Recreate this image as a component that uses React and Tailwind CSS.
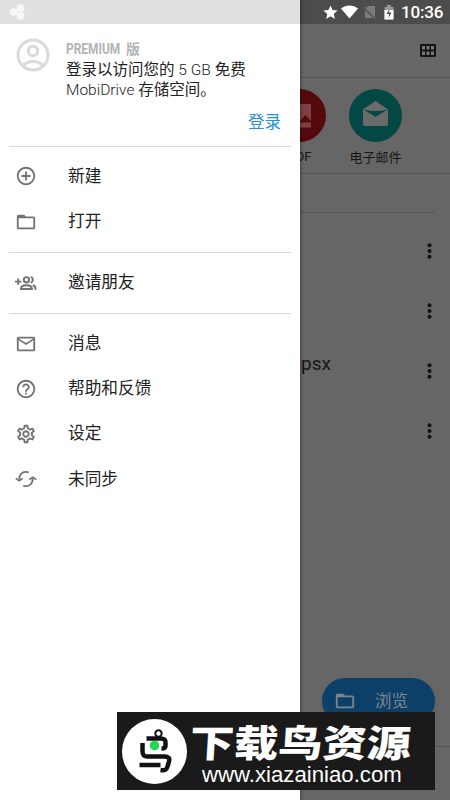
import React from "react";

const font = "font-['Roboto','Noto_Sans_CJK_SC',sans-serif]";

const Icon = ({ children, className = "size-[22px]", box = "0 0 24 24" }) => (
  <svg viewBox={box} className={className} fill="currentColor">
    {children}
  </svg>
);

const icons = {
  add: (
    <path d="M13 7h-2v4H7v2h4v4h2v-4h4v-2h-4V7zm-1-5C6.480 2 2 6.480 2 12s4.480 10 10 10 10-4.480 10-10S17.520 2 12 2zm0 18c-4.410 0-8-3.590-8-8s3.590-8 8-8 8 3.590 8 8-3.590 8-8 8z" />
  ),
  folder: (
    <path d="M10 4H4c-1.100 0-1.990.9-1.990 2L2 18c0 1.100.9 2 2 2h16c1.100 0 2-.9 2-2V8c0-1.100-.9-2-2-2h-8l-2-2zM4 8h16v10H4z" />
  ),
  invite: (
    <g fill="none" stroke="currentColor" strokeWidth="2.100">
      <path d="M0 10.500h7M3.500 7v7" />
      <circle cx="12.500" cy="8.500" r="2.900" />
      <path d="M6.500 18.500c0-5.300 12-5.300 12 0z" />
      <path d="M17 5.600c3.200-.4 3.200 6.200 0 5.800M19.500 14c2 .8 3 2.300 3 5.300" />
    </g>
  ),
  mail: (
    <path d="M22 6c0-1.100-.9-2-2-2H4c-1.100 0-2 .9-2 2v12c0 1.100.9 2 2 2h16c1.100 0 2-.9 2-2V6zm-2 0l-8 5-8-5h16zm0 12H4V8l8 5 8-5v10z" />
  ),
  help: (
    <path d="M11 18h2v-2h-2v2zm1-16C6.480 2 2 6.480 2 12s4.480 10 10 10 10-4.480 10-10S17.520 2 12 2zm0 18c-4.410 0-8-3.590-8-8s3.590-8 8-8 8 3.590 8 8-3.590 8-8 8zm0-14c-2.210 0-4 1.790-4 4h2c0-1.100.9-2 2-2s2 .9 2 2c0 2-3 1.750-3 5h2c0-2.250 3-2.500 3-5 0-2.210-1.790-4-4-4z" />
  ),
  settings: (
    <path d="M19.430 12.980c.04-.32.07-.64.07-.98 0-.34-.03-.66-.07-.98l2.110-1.650c.19-.15.24-.42.12-.64l-2-3.460c-.09-.16-.26-.25-.44-.25-.06 0-.12.010-.17.030l-2.490 1c-.52-.4-1.080-.73-1.690-.98l-.38-2.650C14.460 2.180 14.250 2 14 2h-4c-.25 0-.46.18-.49.42l-.38 2.650c-.61.25-1.170.59-1.690.98l-2.490-1c-.06-.02-.12-.03-.18-.03-.17 0-.34.09-.43.25l-2 3.460c-.13.22-.07.49.12.64l2.110 1.650c-.04.32-.07.65-.07.98 0 .33.030.66.070.98l-2.110 1.650c-.19.15-.24.42-.12.64l2 3.460c.09.16.26.25.44.25.060 0 .12-.010.17-.030l2.490-1c.52.4 1.080.73 1.690.98l.38 2.650c.030.24.24.42.49.42h4c.25 0 .46-.18.49-.42l.38-2.650c.61-.25 1.170-.59 1.690-.98l2.490 1c.060.020.12.030.18.030.17 0 .34-.09.43-.25l2-3.460c.12-.22.070-.49-.12-.64l-2.110-1.650zm-1.980-1.710c.040.31.050.52.050.73 0 .21-.020.43-.050.73l-.14 1.130.89.7 1.080.84-.7 1.210-1.270-.51-1.040-.42-.9.68c-.43.32-.84.56-1.250.73l-1.060.43-.16 1.130-.2 1.350h-1.400l-.19-1.350-.16-1.130-1.060-.43c-.43-.18-.83-.41-1.230-.71l-.91-.7-1.060.43-1.270.51-.7-1.210 1.080-.84.89-.7-.14-1.130c-.030-.31-.050-.54-.050-.74s.020-.43.050-.73l.14-1.130-.89-.7-1.080-.84.7-1.210 1.270.51 1.040.42.9-.68c.43-.32.84-.56 1.250-.73l1.060-.43.16-1.130.2-1.350h1.390l.19 1.350.16 1.130 1.060.43c.43.18.83.41 1.230.71l.91.7 1.060-.43 1.270-.51.7 1.210-1.070.85-.89.7.14 1.130zM12 8c-2.210 0-4 1.790-4 4s1.790 4 4 4 4-1.790 4-4-1.790-4-4-4zm0 6c-1.100 0-2-.9-2-2s.9-2 2-2 2 .9 2 2-.9 2-2 2z" />
  ),
  sync: (
    <g fill="none" stroke="currentColor" strokeWidth="1.900">
      <path d="M15 4.800C9 2.700 4.600 6.500 4.600 12.500M9 19.200c6 2.100 10.400-1.700 10.400-7.700" />
      <path d="M.8 11.300l3.800 2.500 3.800-2.500M15.600 12.700l3.800-2.500 3.800 2.500" />
    </g>
  ),
};

const groups = [
  [
    { icon: "add", label: "新建" },
    { icon: "folder", label: "打开" },
  ],
  [{ icon: "invite", label: "邀请朋友" }],
  [
    { icon: "mail", label: "消息" },
    { icon: "help", label: "帮助和反馈" },
    { icon: "settings", label: "设定" },
    { icon: "sync", label: "未同步" },
  ],
];

const StatusIcons = () => (
  <div className="flex h-6 items-center justify-end bg-[#4c4c4c] pr-[7px] text-white">
    <Icon className="mr-[2px] size-[17px]">
      <path d="M12 17.270L18.180 21l-1.640-7.030L22 9.240l-7.190-.61L12 2 9.190 8.630 2 9.240l5.460 4.730L5.820 21z" />
    </Icon>
    <Icon className="mr-[6px] h-[14px] w-[17px]" box="0 0 17 14">
      <path d="M8.500 13.500L0 3.500C5-.6 12-.6 17 3.500z" />
    </Icon>
    <Icon className="mr-[8px] h-[14px] w-[12px] text-[#7c7c7c]" box="0 0 12 14">
      <path d="M4 1h7v11L2 3zM1 5l8 8H1z" />
      <path d="M0 1.500L11.500 13.500" stroke="currentColor" strokeWidth="1" />
    </Icon>
    <Icon className="mr-[7px] h-[15px] w-[10px]" box="0 0 10 15">
      <path d="M3 0h4v2h2.500v12.500h-9V2H3z" fill="#999" />
      <path d="M.5 5h9v9.500h-9z" />
      <path d="M5.500 4L2.500 9H5l-.5 4 3-5.500H5z" fill="#4c4c4c" />
    </Icon>
    <span className="w-[42px] text-[17px] leading-6 font-medium tracking-[-0.200px] whitespace-nowrap">10:36</span>
  </div>
);

const MainPage = () => (
  <div className="ml-[300px] flex h-full flex-col bg-[#666]">
    <StatusIcons />
    <div className="flex h-[54px] items-center justify-end border-b border-[#555] pr-[14px]">
      <svg viewBox="0 0 16 13" className="h-[13px] w-4">
        <rect width="16" height="13" rx="1.500" fill="#141414" />
        <path d="M2 2h3v3.500H2zM6.500 2h3v3.500h-3zM11 2h3v3.500h-3zM2 7.500h3V11H2zM6.500 7.500h3V11h-3zM11 7.500h3V11h-3z" fill="#777" />
      </svg>
    </div>
    <div className="flex h-[96px] gap-[23px] border-b border-[#555] pt-[11px] text-[13px] text-[#161616]">
      <div className="-ml-[27px] flex w-[53px] flex-col items-center">
        <svg viewBox="0 0 53 53" className="size-[53px]">
          <circle cx="26.500" cy="26.500" r="26.500" fill="#56090d" />
          <path d="M16 15h22v17H16zM16 33.500h22v5H16z" fill="#7c4144" />
          <path d="M27 32l5.500-6 5.500 6z" fill="#56090d" />
        </svg>
        <span className="mt-[5px] leading-5">PDF</span>
      </div>
      <div className="flex w-[53px] flex-col items-center">
        <svg viewBox="0 0 53 53" className="size-[53px]">
          <circle cx="26.500" cy="26.500" r="26.500" fill="#044846" />
          <path d="M14 20.500l12.500-8.500L39 20.500V35a2 2 0 0 1-2 2H16a2 2 0 0 1-2-2z" fill="#6b6b6b" />
          <path d="M14.500 20.500c8 2 16 2 24 0L26.500 28z" fill="#044846" />
        </svg>
        <span className="mt-[6px] leading-5 whitespace-nowrap">电子邮件</span>
      </div>
    </div>
    <div className="mr-[15px] h-[39px] shrink-0 border-b border-[#575757]" />
    <div className="mt-[8px] flex flex-col">
      {["", "", "psx", ""].map((name, i) => (
        <div key={i} className="flex h-[60px] items-center justify-between pr-[18px]">
          <span className="pb-[14px] pl-px text-[19px] text-[#161616]">{name}</span>
          <svg viewBox="0 0 5 16" className="h-4 w-[5px]" fill="#111">
            <circle cx="2.500" cy="2.200" r="2" />
            <circle cx="2.500" cy="8" r="2" />
            <circle cx="2.500" cy="13.800" r="2" />
          </svg>
        </div>
      ))}
    </div>
    <div className="mt-auto flex h-[68px] shrink-0 justify-end pr-[15px]">
      <div className="flex h-[46px] w-[113px] items-center rounded-full bg-[#0d4068] pl-3 text-[#7b868e] shadow-md">
        <Icon>{icons.folder}</Icon>
        <span className="mt-[3px] ml-[19px] text-[16.500px]">浏览</span>
      </div>
    </div>
    <div className="h-[54px] shrink-0 border-t border-[#555]" />
  </div>
);

const Drawer = () => (
  <div className="absolute top-0 left-0 h-full w-[300px] bg-white shadow-[0_0_4px_rgba(0,0,0,0.6)]">
    <div className="h-6 bg-[#e0e0e0] pt-[3px] pl-[9px] text-[#f6f6f6]">
      <Icon className="size-[18px]" box="0 0 18 18">
        <path d="M5 9l6-4M5 9l6 4" stroke="currentColor" strokeWidth="3" />
        <circle cx="4.500" cy="9" r="3.800" />
        <circle cx="11.500" cy="5" r="4" />
        <circle cx="11.500" cy="13" r="4" />
      </Icon>
    </div>
    <div className="h-[121.500px] pt-[14px] pl-4">
      <div className="flex">
        <svg viewBox="0 0 34 34" className="size-[34px]" fill="none" stroke="#dadada" strokeWidth="3">
          <circle cx="17" cy="17" r="15" />
          <circle cx="17" cy="13" r="4.700" />
          <path d="M7 27.500c5-5.500 15-5.500 20 0" />
        </svg>
        <div className="ml-4">
          <div className="flex h-[22px] items-center gap-1 text-[14px] leading-5 font-bold text-[#b3b3b3]">
            <span className="w-[56px] origin-left scale-x-[0.850]">PREMIUM</span>
            <span>版</span>
          </div>
          <div className="mt-px text-[15.500px] leading-[19.500px] whitespace-nowrap text-[#222]">
            登录以访问您的 <span className="font-light">5 GB</span> 免费
            <br />
            <span className="font-light">MobiDrive</span> 存储空间。
          </div>
        </div>
      </div>
      <div className="mt-[11px] pr-[19px] text-right text-[16.500px] leading-6 text-[#2290e0]">登录</div>
    </div>
    {groups.map((items, i) => (
      <div key={i} className="mx-[9px] border-t border-[#dadada] py-[7.400px]">
        {items.map(({ icon, label }) => (
          <div key={label} className="flex h-[45.200px] items-center pl-[6px] text-[#727272]">
            <Icon>{icons[icon]}</Icon>
            <span className="ml-[31px] text-[16.700px] text-[#222]">{label}</span>
          </div>
        ))}
      </div>
    ))}
  </div>
);

const Banner = () => (
  <div className="absolute top-[712px] left-[117px] flex h-[78px] w-[318px] items-center bg-[#1a1a1a] pl-[5px] text-white">
    <svg viewBox="0 0 65 65" className="size-[65px] shrink-0">
      <circle cx="32.500" cy="32.500" r="32.500" fill="#fff" />
      <g fill="none" stroke="#111" strokeWidth="4.500" strokeLinejoin="round">
        <circle cx="36.500" cy="14.500" r="3.200" strokeWidth="2" />
        <path d="M24.500 19.500h14c4 0 5 1 5 4v3c0 2-1 3-4 3" />
        <path d="M20.500 24v8c0 4 1.500 5.500 5 5.500h17c4 0 5.500 1.500 4.500 5l-1.500 5c-1 4-3 4-7 3.500" />
        <path d="M17.500 46h21" />
      </g>
      <circle cx="32.500" cy="26.500" r="4.800" fill="#24d957" />
    </svg>
    <div className="flex flex-col pt-[6px]">
      <span className="ml-[3px] h-[39px] origin-left scale-x-[1.180] -skew-x-3 font-['Noto_Sans_CJK_SC',sans-serif] text-[37.500px] leading-[38px] font-black whitespace-nowrap">
        下载鸟资源
      </span>
      <span className="mt-[2px] pl-[15px] font-['Liberation_Sans',sans-serif] text-[22.200px] leading-6 whitespace-nowrap">www.xiazainiao.com</span>
    </div>
  </div>
);

const App = () => {
  return (
    <div className={`relative h-[800px] w-[450px] overflow-hidden ${font}`}>
      <MainPage />
      <Drawer />
      <Banner />
    </div>
  );
};

export default App;
